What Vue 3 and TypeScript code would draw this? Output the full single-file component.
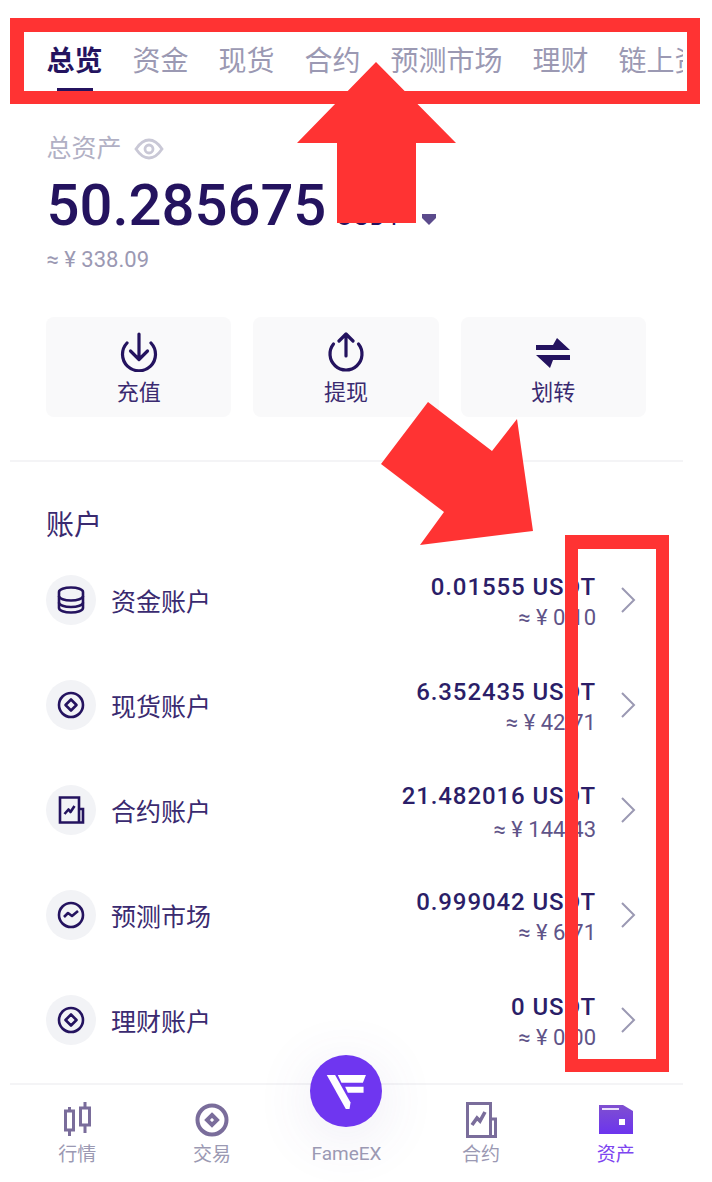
<script setup lang="ts">
interface Account {
  name: string
  icon: 'stack' | 'coin' | 'chart' | 'trend'
  amount: string
  cny: string
  tall?: boolean
}

const tabs = ['总览', '资金', '现货', '合约', '预测市场', '理财', '链上资产']

const actions = [
  { label: '充值', icon: 'in' },
  { label: '提现', icon: 'out' },
  { label: '划转', icon: 'swap' }
]

const accounts: Account[] = [
  { name: '资金账户', icon: 'stack', amount: '0.01555 USDT', cny: '≈ ¥ 0.10' },
  { name: '现货账户', icon: 'coin', amount: '6.352435 USDT', cny: '≈ ¥ 42.71' },
  { name: '合约账户', icon: 'chart', amount: '21.482016 USDT', cny: '≈ ¥ 144.43', tall: true },
  { name: '预测市场', icon: 'trend', amount: '0.999042 USDT', cny: '≈ ¥ 6.71' },
  { name: '理财账户', icon: 'coin', amount: '0 USDT', cny: '≈ ¥ 0.00' }
]
</script>

<template>
  <div class="page">
    <div class="screen">
      <nav class="tabs">
        <div v-for="(tab, i) in tabs" :key="tab" class="tab" :class="{ 'is-active': i === 0 }">
          <span>{{ tab }}</span>
          <i class="tab-line"></i>
        </div>
      </nav>

      <section class="total">
        <div class="total-label">
          <span>总资产</span>
          <svg width="30" height="24" viewBox="0 0 30 24" fill="none" stroke="#c9c8d6" stroke-width="2.800">
            <path d="M2 12C6 6 10 3 15 3s9 3 13 9c-4 6-8 9-13 9S6 18 2 12z" />
            <circle cx="15" cy="12" r="4" />
          </svg>
        </div>
        <div class="total-value">
          <span class="total-num">50.285675</span>
          <span class="total-unit">USDT</span>
          <svg class="total-caret" width="16" height="12" viewBox="0 0 16 12"><path d="M1 1h14v4l-7 7-7-7z" fill="#5b4b8c" /></svg>
        </div>
        <div class="total-cny">≈ ¥ 338.09</div>
      </section>

      <section class="actions">
        <div v-for="a in actions" :key="a.label" class="action">
          <svg width="40" height="40" viewBox="0 0 40 40" fill="none" stroke="#24135f" stroke-width="3.200" stroke-linecap="round" stroke-linejoin="round">
            <template v-if="a.icon === 'in'">
              <path d="M8 11a16.500 16.500 0 1 0 24 0" />
              <path d="M20 2v25M11.500 19l8.500 8.500 8.500-8.500" />
            </template>
            <template v-else-if="a.icon === 'out'">
              <path d="M7.500 12a16 16 0 1 0 25 0" />
              <path d="M20 24V2M13 9l7-7 7 7" />
            </template>
            <template v-else>
              <path d="M3 13h17l4-7 13 12H3z" fill="#24135f" stroke="none" />
              <path d="M37 23H3l14 13 3-8h17z" fill="#24135f" stroke="none" />
            </template>
          </svg>
          <span>{{ a.label }}</span>
        </div>
      </section>

      <div class="divider"></div>

      <h2 class="section-title">账户</h2>

      <ul class="accounts">
        <li v-for="acc in accounts" :key="acc.name" class="account">
          <div class="account-icon">
            <svg width="30" height="30" viewBox="0 0 30 30" fill="none" stroke="#24135f" stroke-width="2.600" stroke-linejoin="round">
              <template v-if="acc.icon === 'stack'">
                <path d="M3 7c0-2.500 5.500-4.500 12-4.500S27 4.500 27 7v16c0 2.500-5.500 4.500-12 4.500S3 25.500 3 23z" />
                <path d="M3 11c0 2.500 5.500 4.500 12 4.500S27 13.500 27 11M3 17.500c0 2.500 5.500 4.500 12 4.500s12-2 12-4.500" />
              </template>
              <template v-else-if="acc.icon === 'coin'">
                <circle cx="15" cy="15" r="12" />
                <path d="M15 9.500l5.500 5.500-5.500 5.500L9.500 15z" />
              </template>
              <template v-else-if="acc.icon === 'chart'">
                <path d="M4 2.500h19v25H4zM23 14h4v13.500h-4" stroke-linejoin="miter" />
                <path d="M8.500 19l4-4.500 2 2.500 4-6" />
              </template>
              <template v-else>
                <circle cx="15" cy="15" r="12" />
                <path d="M8 17l4-4 4 3 6-5" />
              </template>
            </svg>
          </div>
          <span class="account-name">{{ acc.name }}</span>
          <div class="account-values" :class="{ 'is-tall': acc.tall }">
            <span class="account-amount">{{ acc.amount }}</span>
            <span class="account-cny">{{ acc.cny }}</span>
          </div>
          <svg class="chevron" width="16" height="26" viewBox="0 0 16 26" fill="none" stroke="#9b99b3" stroke-width="2">
            <path d="M2 1l12 12L2 25" />
          </svg>
        </li>
      </ul>

      <footer class="bottom-nav">
        <div class="nav-item">
          <svg width="30" height="38" viewBox="0 0 30 38" fill="none" stroke="#7a6d9b" stroke-width="3">
            <path d="M3.500 10h8v19h-8zM7.500 6v4M7.500 29v6M18.500 7h9v17h-9zM23 1v6M23 24v8" />
          </svg>
          <span>行情</span>
        </div>
        <div class="nav-item">
          <svg width="36" height="38" viewBox="0 0 36 38" fill="none" stroke="#7a6d9b" stroke-width="4">
            <circle cx="18" cy="19" r="14.500" />
            <path d="M18 14l5 5-5 5-5-5z" />
          </svg>
          <span>交易</span>
        </div>
        <div class="nav-item nav-item--logo">
          <div class="logo">
            <svg width="72" height="72" viewBox="30 30 215 215" fill="#fff">
              <path d="M80 90h25l46 82-3 19h-11z" />
              <path d="M113 90h84l-9 23h-64z" />
              <path d="M135 125h55v18h-47z" />
            </svg>
          </div>
          <span>FameEX</span>
        </div>
        <div class="nav-item">
          <svg width="32" height="38" viewBox="0 0 32 38" fill="none" stroke="#7a6d9b" stroke-width="3">
            <path d="M2.500 2.500h23v33h-23zM25.500 18h5v17.500h-5" />
            <path d="M7 24l5-7 3 3 5-9" stroke-width="3.600" />
          </svg>
          <span>合约</span>
        </div>
        <div class="nav-item nav-item--active">
          <svg width="34" height="38" viewBox="0 0 34 38">
            <defs>
              <linearGradient id="wallet" x1="0" y1="0" x2="0" y2="1">
                <stop offset="0" stop-color="#7f4fd0" />
                <stop offset="1" stop-color="#6c34ee" />
              </linearGradient>
            </defs>
            <path d="M0 4h24l10 6v23H0z" fill="url(#wallet)" />
            <path d="M3 7h17v2H3z" fill="#e9defb" />
            <path d="M20 18h6v6h-6z" fill="#fff" />
          </svg>
          <span>资产</span>
        </div>
      </footer>
    </div>

    <!-- red annotations drawn on top of the screenshot -->
    <svg class="marks" width="712" height="1182" viewBox="0 0 712 1182">
      <path fill="#ff3333" fill-rule="evenodd" d="M10 18h690v86H10zM24 32v59h663V32z" />
      <path fill="#ff3333" d="M376 62l80 81h-40v80h-79v-80h-40z" />
      <path fill="#ff3333" d="M428 402l64 49 25-32 16 112-113 14 24-33-63-48z" />
      <path fill="#ff3333" fill-rule="evenodd" d="M565 535h104v537H565zM578 549v510h78V549z" />
    </svg>
  </div>
</template>

<style scoped>
.page {
  position: relative;
  width: 712px;
  height: 1182px;
  overflow: hidden;
  background: #fff;
  color: #24135f;
  font-family: Roboto, "Noto Sans CJK SC", sans-serif;
}

.screen {
  width: 673px;
  margin-left: 10px;
}

.tabs {
  display: flex;
  gap: 30px;
  padding: 42px 0 0 36.5px;
  overflow: hidden;
}

.tab {
  flex: none;
  font-size: 28px;
  line-height: 40px;
  color: #9b99b3;
}

.tab span {
  display: block;
}

.tab-line {
  display: block;
  width: 36px;
  height: 4px;
  margin: 6px auto 0;
}

.tab.is-active {
  color: #24135f;
  font-weight: 700;
}

.tab.is-active .tab-line {
  background: #24135f;
}

.total {
  padding-left: 36.5px;
  margin-top: 40px;
}

.total-label {
  display: flex;
  align-items: center;
  gap: 12px;
  font-size: 25px;
  line-height: 34px;
  color: #b1b0c4;
}

.total-value {
  display: flex;
  align-items: baseline;
  margin-top: 9px;
  line-height: 60px;
}

.total-num {
  font-size: 58px;
  font-weight: 500;
}

.total-unit {
  margin-left: 10px;
  font-size: 25px;
  line-height: 1;
  letter-spacing: 1px;
}

.total-caret {
  margin: 0 0 2px 19px;
}

.total-cny {
  margin-top: 10px;
  font-size: 22px;
  line-height: 30px;
  color: #9b99b3;
}

.actions {
  display: flex;
  gap: 22px;
  padding: 0 37px 0 36px;
  margin-top: 42px;
}

.action {
  flex: 1;
  height: 100px;
  display: flex;
  flex-direction: column;
  align-items: center;
  padding-top: 15px;
  box-sizing: border-box;
  background: #f9f9fa;
  border-radius: 8px;
  font-size: 22px;
  line-height: 32px;
  color: #3a2a70;
}

.action span {
  margin-top: 5px;
}

.divider {
  height: 2px;
  margin-top: 43px;
  background: #f4f4f6;
}

.section-title {
  margin: 44px 0 0 36px;
  font-size: 28px;
  font-weight: 400;
  line-height: 40px;
  color: #3a2a70;
}

.accounts {
  list-style: none;
  margin: 1px 0 0;
  padding: 0;
}

.account {
  height: 105px;
  display: flex;
  align-items: center;
  padding-left: 36px;
}

.account-icon {
  width: 50px;
  height: 50px;
  flex: none;
  display: flex;
  align-items: center;
  justify-content: center;
  border-radius: 50%;
  background: #f2f3f6;
}

.account-name {
  margin-left: 15px;
  font-size: 25px;
  color: #3a2a70;
}

.account-values {
  margin-left: auto;
  padding-top: 6px;
  display: flex;
  flex-direction: column;
  align-items: flex-end;
  gap: 1px;
}

.account-values.is-tall {
  gap: 4px;
}

.account-amount {
  font-size: 24px;
  font-weight: 500;
  line-height: 30px;
  letter-spacing: 0.9px;
  color: #2b1e68;
}

.account-cny {
  font-size: 22px;
  line-height: 30px;
  color: #5f5488;
}

.chevron {
  margin: 0 47px 0 24px;
}

.bottom-nav {
  display: grid;
  grid-template-columns: repeat(5, 1fr);
  margin-top: 11px;
  padding-top: 16px;
  border-top: 2px solid #f4f4f6;
}

.nav-item {
  display: flex;
  flex-direction: column;
  align-items: center;
  font-size: 19px;
  line-height: 32px;
  color: #9b99b3;
}

.nav-item--active {
  color: #7d45f0;
}

.nav-item--logo {
  margin-top: -46px;
}

.logo {
  width: 72px;
  height: 72px;
  margin-bottom: 11px;
  border-radius: 50%;
  background: #6f36f0;
  box-shadow: 0 10px 60px rgba(90, 70, 160, 0.12);
}

.marks {
  position: absolute;
  inset: 0;
  pointer-events: none;
}
</style>
